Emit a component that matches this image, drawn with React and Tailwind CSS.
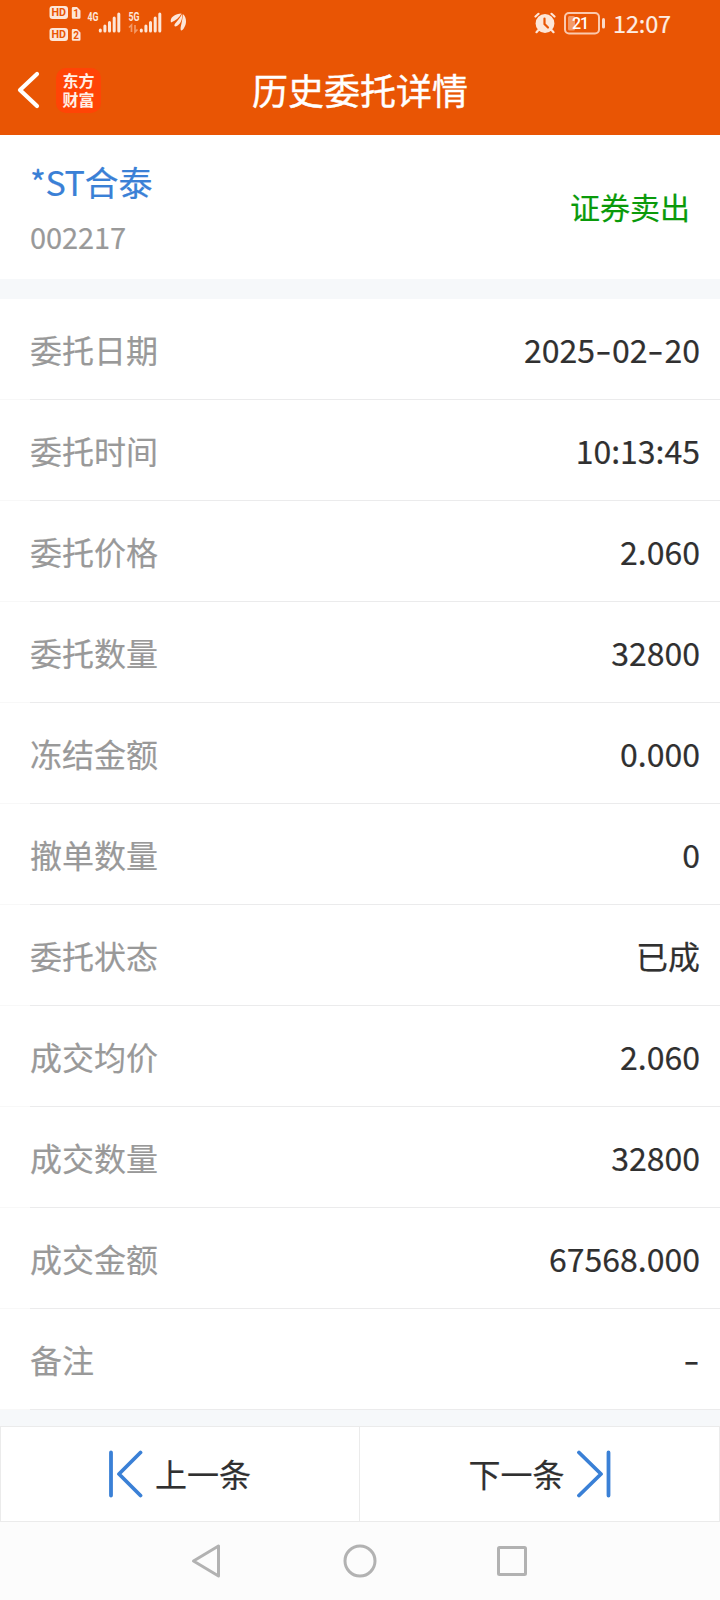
const CJK = "font-['Noto_Sans_CJK_SC','Noto_Sans',sans-serif]";

const rows = [
  ["委托日期", "2025-02-20"],
  ["委托时间", "10:13:45"],
  ["委托价格", "2.060"],
  ["委托数量", "32800"],
  ["冻结金额", "0.000"],
  ["撤单数量", "0"],
  ["委托状态", "已成"],
  ["成交均价", "2.060"],
  ["成交数量", "32800"],
  ["成交金额", "67568.000"],
  ["备注", "-"],
];

function SimBadge({ n }) {
  return (
    <svg width="32" height="13" viewBox="0 0 32 13" className="block">
      <rect x="0.5" y="0" width="18.5" height="13" rx="3" fill="#fde6d8" />
      <text x="9.8" y="10.4" textAnchor="middle" fontSize="11" fontWeight="700" fill="#e95504" textLength="14.5" lengthAdjust="spacingAndGlyphs" fontFamily="Roboto, sans-serif">HD</text>
      <path d="M24 1h4l3.500 3.500v7a1.200 1.200 0 0 1-1.200 1.200h-6.300A1.200 1.200 0 0 1 22.800 11.500V2.200A1.200 1.200 0 0 1 24 1z" fill="#fde6d8" />
      <text x="27" y="10.600" textAnchor="middle" fontSize="10" fontWeight="700" fill="#e95504" fontFamily="Roboto, sans-serif">{n}</text>
    </svg>
  );
}

function Signal({ label, data }) {
  return (
    <svg width="35" height="26" viewBox="0 -3 35 26" className="block">
      <text x="0.500" y="10" fontSize="12.500" fontWeight="700" fill="#fde6d8" textLength="11" lengthAdjust="spacingAndGlyphs" fontFamily="Roboto, sans-serif">{label}</text>
      {data && <path d="M1 16.500l2.500-2.500v7M7 14v7l2.500-2.500" fill="none" stroke="#f39a68" strokeWidth="1.700" />}
      <path d="M13.300 19v1M17.900 15v5M22.500 11.500v8.500M27.200 7v13M31.800 3v17" stroke="#fde6d8" strokeWidth="3" strokeLinecap="round" />
    </svg>
  );
}

function StatusBar() {
  return (
    <div className="flex h-[45px] items-start">
      <div className="ml-[49px] mt-[6px] flex flex-col gap-[9px]">
        <SimBadge n="1" />
        <SimBadge n="2" />
      </div>
      <div className="ml-[6px] mt-[8px]"><Signal label="4G" /></div>
      <div className="ml-[6px] mt-[8px]"><Signal label="5G" data /></div>
      <svg width="17" height="19" viewBox="0 0 17 19" className="ml-[7px] mt-[12px]">
        <g fill="#fde6d8">
          <path d="M1 10.500C-.5 6 4 2 11.500 1.500 9.500 5.500 6 8.500 1 10.500z" />
          <path d="M4.500 14C3.800 11.500 8.500 9 12 2c.8 5-1.500 10-5 12-1 .600-2.200.700-2.500 0z" />
          <path d="M11 18.500C9.500 16 12.500 11 12.800 2c3.500 2.500 4.500 9 1.200 14-.8 1.500-2 2.700-3 2.500z" />
        </g>
      </svg>
      <div className="ml-auto mr-[49px] mt-[10px] flex h-[26px] items-center">
        <svg width="22" height="22" viewBox="0 0 22 22" className="block">
          <circle cx="11" cy="11.500" r="9.400" fill="#fde6d8" />
          <path d="M1.500 4.500L4.500 1.800M20.500 4.500L17.500 1.800M4 18.500L2.500 20.200M18 18.500L19.500 20.200" stroke="#fde6d8" strokeWidth="2.200" strokeLinecap="round" />
          <path d="M10.500 6.500v5.500l3.500 3.500" fill="none" stroke="#e95504" strokeWidth="2.200" strokeLinecap="round" />
        </svg>
        <svg width="42" height="23" viewBox="0 0 42 23" className="ml-[8px] block">
          <rect x="1" y="1" width="34" height="20.500" rx="4" fill="none" stroke="#fbc9ae" strokeWidth="2" />
          <rect x="4" y="4" width="7" height="14.500" rx="1.500" fill="#f39a68" />
          <path d="M39.500 7.500v7.500" stroke="#fbdac8" strokeWidth="3" strokeLinecap="round" />
          <text x="16.500" y="16.800" textAnchor="middle" fontSize="16" fontWeight="500" fill="#fff" fontFamily="Roboto, sans-serif" textLength="17">21</text>
        </svg>
        <span className="ml-[7px] text-[23.500px] leading-[24px] tracking-[-0.150px] text-[#fdeee4] [-webkit-text-stroke:0.200px]">12:07</span>
      </div>
    </div>
  );
}

function Value({ text }) {
  return (
    <span className="flex items-center pb-px text-[32px] leading-none text-[#303030]">
      {text.split(/(-)/).filter(Boolean).map((part, i) =>
        part === "-" ? (
          <span key={i} className="w-[17px] scale-x-115 pt-[7px] text-center font-['Inter',sans-serif]">-</span>
        ) : (
          <span key={i}>{part}</span>
        )
      )}
    </span>
  );
}

export default function App() {
  return (
    <div className={`${CJK} flex h-[1600px] w-[720px] flex-col bg-[#fcfcfc]`}>
      <header className="h-[135px] bg-[#e95504]">
        <StatusBar />
        <div className="grid h-[90px] grid-cols-[1fr_auto_1fr] items-center">
          <div className="flex items-center">
            <svg width="24" height="38" viewBox="0 0 24 38" className="ml-[17px] block">
              <path d="M20 3L3 19 20 35" fill="none" stroke="#fff" strokeWidth="4.200" strokeLinecap="round" strokeLinejoin="round" />
            </svg>
            <div className="ml-[15px] flex h-[45px] w-[45px] flex-col items-center justify-center rounded-[10px] bg-[#ff4406] pb-px text-[16px] font-bold leading-[19px] text-[#fff0e6]">
              <span>东方</span>
              <span>财富</span>
            </div>
          </div>
          <h1 className="pb-[3px] text-[36px] leading-none text-white [-webkit-text-stroke:0.400px]">历史委托详情</h1>
          <div />
        </div>
      </header>

      <section className="flex h-[144px] items-center justify-between bg-white pl-[30px] pr-[30px] [-webkit-text-stroke:0.200px]">
        <div className="flex flex-col">
          <span className="flex text-[34px] leading-[50px] text-[#3a80d6]">
            <span className="tracking-[-0.400px]">*ST</span>
            <span>合泰</span>
          </span>
          <span className="mt-[7px] text-[29px] leading-[44px] tracking-[-0.100px] text-[#999]">002217</span>
        </div>
        <span className="pb-[2px] text-[30px] leading-none text-[#0a9a0a]">证券卖出</span>
      </section>

      <div className="h-[20px] bg-[#f6f8fa]" />

      <section className="[-webkit-text-stroke:0.200px]">
        {rows.map(([label, value]) => (
          <div key={label} className="flex h-[101px] bg-white">
            <div className="w-[30px] border-b border-[#f8f8f8]" />
            <div className="flex flex-1 items-center justify-between border-b border-[#ebebec] pr-[20px]">
              <span className="pb-px text-[32px] leading-none text-[#999]">{label}</span>
              <Value text={value} />
            </div>
          </div>
        ))}
      </section>

      <div className="h-[16px] bg-[#f6f8fa]" />

      <div className="grid h-[96px] grid-cols-2 border border-[#ebebeb] bg-white text-[32px] leading-none text-[#303030] [-webkit-text-stroke:0.200px]">
        <button className="flex items-center justify-center gap-[12px] border-r border-[#ebebeb] pb-px">
          <svg width="34" height="48" viewBox="0 0 34 48">
            <path d="M2 2.500v43M31.500 2.500L10 24l21.500 21.500" fill="none" stroke="#3a80d6" strokeWidth="3.800" strokeLinecap="round" strokeLinejoin="round" />
          </svg>
          <span className="pb-px">上一条</span>
        </button>
        <button className="flex items-center justify-center gap-[12px] pb-px">
          <span className="pb-px">下一条</span>
          <svg width="34" height="48" viewBox="0 0 34 48">
            <path d="M31.500 2.500v43M2 2.500L24 24 2 45.500" fill="none" stroke="#3a80d6" strokeWidth="3.800" strokeLinecap="round" strokeLinejoin="round" />
          </svg>
        </button>
      </div>

      <nav className="flex h-[78px] items-center justify-center gap-[118px]">
        <svg width="34" height="36" viewBox="0 0 34 36">
          <path d="M27.500 3v30L2.500 18z" fill="none" stroke="#b2b2b2" strokeWidth="3" strokeLinejoin="round" />
        </svg>
        <svg width="34" height="34" viewBox="0 0 34 34">
          <circle cx="17" cy="17" r="15" fill="none" stroke="#b2b2b2" strokeWidth="3" />
        </svg>
        <svg width="34" height="34" viewBox="0 0 34 34">
          <rect x="3.500" y="3.500" width="27" height="27" rx="1" fill="none" stroke="#b2b2b2" strokeWidth="3" />
        </svg>
      </nav>
    </div>
  );
}
